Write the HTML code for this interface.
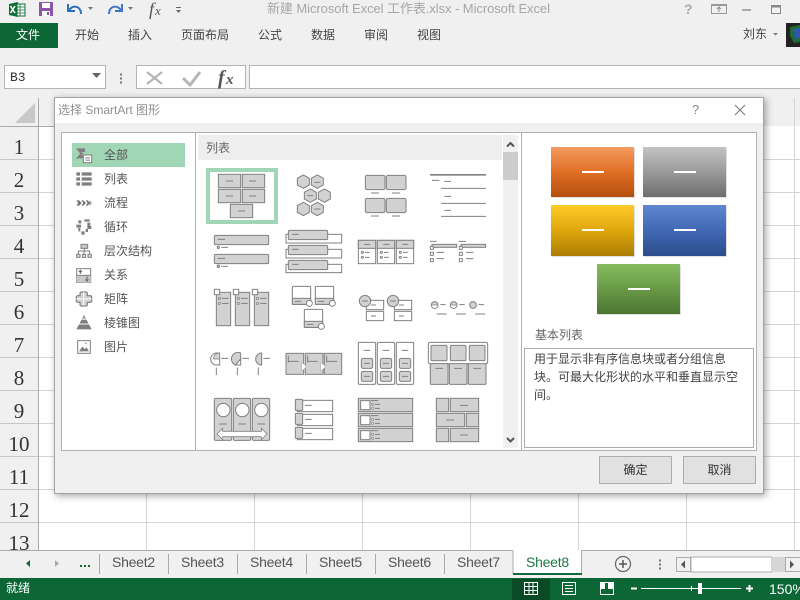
<!DOCTYPE html>
<html><head><meta charset="utf-8">
<style>
*{margin:0;padding:0;box-sizing:border-box}
html,body{width:800px;height:600px;overflow:hidden;background:#fff}
body{position:relative;font-family:"Liberation Sans","Noto Sans CJK SC",sans-serif;font-size:12px;color:#444}
.a{position:absolute;white-space:nowrap;line-height:16px}
svg{position:absolute;left:0;top:0}
.g{fill:#d2d2d2;stroke:#808080;stroke-width:3}
.w{fill:#fff;stroke:#808080;stroke-width:3}
.l{fill:none;stroke:#808080;stroke-width:3}
.i{fill:#7f7f7f}
.rn{font-family:"Liberation Serif",serif;font-size:21px;color:#333;width:30px;text-align:center;left:4px;line-height:24px}
.sh{font-size:14px;color:#555;top:554px;letter-spacing:-.25px}
.cat{left:104px;color:#555}
</style></head><body>

<!-- chrome backgrounds -->
<div class="a" style="left:0;top:0;width:800px;height:126px;background:#f0f0f0"></div>
<div class="a" style="left:0;top:126px;width:38px;height:424px;background:#f0f0f0"></div>
<div class="a" style="left:0;top:550px;width:800px;height:28px;background:#f0f0f0"></div>
<div class="a" style="left:0;top:578px;width:800px;height:22px;background:#0c6636"></div>
<div class="a" style="left:0;top:23px;width:58px;height:25px;background:#0c6636"></div>
<div class="a" style="left:512px;top:579px;width:38px;height:21px;background:#0a4a27"></div>
<div class="a" style="left:4px;top:65px;width:102px;height:24px;background:#fff;border:1px solid #b4b4b4"></div>
<div class="a" style="left:136px;top:65px;width:110px;height:24px;background:#fff;border:1px solid #b4b4b4"></div>
<div class="a" style="left:249px;top:65px;width:560px;height:24px;background:#fff;border:1px solid #b4b4b4"></div>

<svg width="800" height="600" viewBox="0 0 800 600">
<!-- grid -->
<g stroke="#d4d4d4" stroke-width="1" fill="none">
<path d="M38 159.500H800M38 192.500H800M38 225.500H800M38 258.500H800M38 291.500H800M38 324.500H800M38 357.500H800M38 390.500H800M38 423.500H800M38 456.500H800M38 489.500H800M38 522.500H800"/>
<path d="M146.500 98V550M254.500 98V550M362.500 98V550M470.500 98V550M578.500 98V550M686.500 98V550M794.500 98V550"/>
</g>
<g stroke="#c6c6c6" stroke-width="1"><path d="M0 159.500H38M0 192.500H38M0 225.500H38M0 258.500H38M0 291.500H38M0 324.500H38M0 357.500H38M0 390.500H38M0 423.500H38M0 456.500H38M0 489.500H38M0 522.500H38"/></g>
<path d="M38.500 98V550M0 126.500H54M0 550.500H513M581 550.500H800" stroke="#ababab" stroke-width="1"/>
<path d="M15 123L35 103V123Z" fill="#c8c8c8"/>
<!-- title icons -->
<path d="M9 4L18 2V17L9 15Z" fill="#0f7038"/><rect x="17" y="4" width="8" height="12" fill="#fff" stroke="#0f7038"/>
<path d="M20 4V16M17 7H25M17 10H25M17 13H25" stroke="#0f7038" stroke-width=".8"/>
<path d="M10.500 6L15 13M15 6L10.500 13" stroke="#fff" stroke-width="1.500"/>
<rect x="39" y="2" width="14" height="14" fill="#8e56a8"/><rect x="42" y="3" width="8" height="5" fill="#fff"/><rect x="42" y="11" width="8" height="5" fill="#fff"/><rect x="47" y="12" width="2" height="3" fill="#8e56a8"/>
<path d="M81 14C81 7 75 5 71 8L69 10" fill="none" stroke="#2f6dbd" stroke-width="2"/><path d="M68 4V11H75" fill="none" stroke="#2f6dbd" stroke-width="2"/>
<path d="M109 14C109 7 115 5 119 8L121 10" fill="none" stroke="#3f78c8" stroke-width="2"/><path d="M122 4V11H115" fill="none" stroke="#3f78c8" stroke-width="2"/>
<path d="M88 7H93L90.500 10ZM128 7H133L130.500 10Z" fill="#777"/>
<path d="M176 7H181V8H176ZM176 10H181L178.500 13Z" fill="#666"/>
<!-- window buttons -->
<rect x="711.500" y="5.500" width="15" height="8" fill="none" stroke="#999"/><path d="M711 4.500H727" stroke="#999"/><path d="M719 12V7M717 9L719 7L721 9" fill="none" stroke="#888"/>
<rect x="742" y="9" width="9" height="2" fill="#aaa"/>
<rect x="771.500" y="5.500" width="9" height="8" fill="none" stroke="#888"/><path d="M771 6.500H781" stroke="#888" stroke-width="2"/>
<path d="M773 33H778L775.500 35.500Z" fill="#777"/>
<rect x="786" y="23" width="14" height="24" fill="#222"/><path d="M790 27L800 25V42L794 43L790 36Z" fill="#1f6b35"/><path d="M793 29L800 28V38L795 39Z" fill="#2f57a8"/>
<!-- formula bar -->
<path d="M92 73H101L96.500 78Z" fill="#666"/>
<path d="M121 73.500V75.500M121 77.500V79.500M121 81.500V83.500" stroke="#555" stroke-width="1.600"/>
<path d="M147 72L162 84M162 72L147 84" stroke="#b5b5b5" stroke-width="2.200"/>
<path d="M183 78L190 85L200 72" fill="none" stroke="#b5b5b5" stroke-width="3"/>
<text x="218" y="84" font-family="Liberation Serif" font-style="italic" font-weight="bold" font-size="20" fill="#555">f</text><text x="226" y="84" font-family="Liberation Serif" font-style="italic" font-weight="bold" font-size="15" fill="#555">x</text>
<text x="149" y="15" font-family="Liberation Serif" font-style="italic" font-size="18" fill="#555">f</text><text x="155" y="15" font-family="Liberation Serif" font-style="italic" font-size="13" fill="#555">x</text>
<!-- sheet bar -->
<path d="M99.500 554V574M168.500 554V574M237.500 554V574M306.500 554V574M375.500 554V574M444.500 554V574" stroke="#aaa"/>
<path d="M26 563.500L30 560V567Z" fill="#0f6b38"/><path d="M59 563.500L55 560V567Z" fill="#aaa"/>
<path d="M80 565H82V567H80ZM84 565H86V567H84ZM88 565H90V567H88Z" fill="#0f6b38"/>
<rect x="513" y="550" width="68" height="25" fill="#fff"/>
<path d="M513 550.500V574M581.500 550V574" stroke="#ababab"/>
<rect x="513" y="573" width="69" height="2" fill="#0f6b38"/>
<circle cx="623" cy="564" r="7.500" fill="none" stroke="#666" stroke-width="1.200"/><path d="M619 564H627M623 560V568" stroke="#555" stroke-width="1.500"/>
<path d="M660 559.500V561.500M660 563.500V565.500M660 567.500V569.500" stroke="#555" stroke-width="1.600"/>
<rect x="676.500" y="557.500" width="14" height="14" fill="#f0f0f0" stroke="#ababab"/>
<rect x="691" y="557" width="81" height="15" fill="#fff" stroke="#ababab"/>
<rect x="772" y="557" width="13" height="15" fill="#d6d6d6"/>
<rect x="785.500" y="557.500" width="15" height="14" fill="#f0f0f0" stroke="#ababab"/>
<path d="M681 564.500L685 560.500V568.500ZM794 564.500L790 560.500V568.500Z" fill="#555"/>
<!-- status icons -->
<path d="M524.500 582.500H537.500V594.500H524.500ZM524.500 586.500H537.500M524.500 590.500H537.500M529 582.500V594.500M533 582.500V594.500" fill="none" stroke="#fff"/>
<rect x="562.500" y="582.500" width="13" height="12" fill="none" stroke="#fff"/><path d="M565 585.500H573M565 588.500H573M565 591.500H573" stroke="#fff"/>
<rect x="600.500" y="582.500" width="13" height="12" fill="none" stroke="#fff"/><path d="M601 583H605V589H601ZM608 583H613V589H608Z" fill="#fff"/>
<path d="M641 588.500H741M691.500 586V591" stroke="#fff" stroke-width="1"/>
<path d="M631 588.500H637M746 588.500H753M749.500 585V592" stroke="#fff" stroke-width="2"/>
<rect x="698" y="583" width="4" height="11" fill="#fff"/>
</svg>

<!-- top text -->
<div class="a" style="left:267px;top:1px;color:#a6a6a6;font-size:13px;letter-spacing:-.07px">新建 Microsoft Excel 工作表.xlsx - Microsoft Excel</div>
<div class="a" style="left:684px;top:1px;color:#aaa;font-size:14px;font-weight:bold">?</div>
<div class="a" style="left:16px;top:27px;color:#fff">文件</div>
<div class="a" style="left:75px;top:27px">开始</div>
<div class="a" style="left:128px;top:27px">插入</div>
<div class="a" style="left:181px;top:27px">页面布局</div>
<div class="a" style="left:258px;top:27px">公式</div>
<div class="a" style="left:311px;top:27px">数据</div>
<div class="a" style="left:364px;top:27px">审阅</div>
<div class="a" style="left:417px;top:27px">视图</div>
<div class="a" style="left:743px;top:26px">刘东</div>
<div class="a" style="left:10px;top:70px;font-family:'Liberation Mono',monospace;font-size:13px;color:#333">B3</div>

<!-- row numbers -->
<div class="a rn" style="top:135px">1</div>
<div class="a rn" style="top:168px">2</div>
<div class="a rn" style="top:201px">3</div>
<div class="a rn" style="top:234px">4</div>
<div class="a rn" style="top:267px">5</div>
<div class="a rn" style="top:300px">6</div>
<div class="a rn" style="top:333px">7</div>
<div class="a rn" style="top:366px">8</div>
<div class="a rn" style="top:399px">9</div>
<div class="a rn" style="top:432px">10</div>
<div class="a rn" style="top:465px">11</div>
<div class="a rn" style="top:498px">12</div>
<div class="a" style="left:0;top:530px;width:38px;height:20px;overflow:hidden"><div class="a rn" style="top:1px">13</div></div>

<!-- sheet tabs -->
<div class="a sh" style="left:112px">Sheet2</div>
<div class="a sh" style="left:181px">Sheet3</div>
<div class="a sh" style="left:250px">Sheet4</div>
<div class="a sh" style="left:319px">Sheet5</div>
<div class="a sh" style="left:388px">Sheet6</div>
<div class="a sh" style="left:457px">Sheet7</div>
<div class="a sh" style="left:526px;color:#1d7a48">Sheet8</div>
<div class="a" style="left:6px;top:580px;color:#fff">就绪</div>
<div class="a" style="left:769px;top:581px;color:#fff;font-size:14px">150%</div>

<!-- dialog -->
<div class="a" style="left:54px;top:97px;width:710px;height:397px;background:#f0f0f0;border:1px solid #a3a3a3;box-shadow:2px 2px 7px rgba(0,0,0,.35)"></div>
<div class="a" style="left:55px;top:98px;width:708px;height:25px;background:#fff"></div>
<div class="a" style="left:58px;top:102px;color:#8f8f8f">选择 SmartArt 图形</div>
<div class="a" style="left:692px;top:102px;color:#8a8a8a;font-size:13px">?</div>
<div class="a" style="left:61px;top:132px;width:135px;height:319px;background:#fff;border:1px solid #aeb2b8"></div>
<div class="a" style="left:195px;top:132px;width:327px;height:319px;background:#fff;border:1px solid #aeb2b8"></div>
<div class="a" style="left:521px;top:132px;width:236px;height:319px;background:#fff;border:1px solid #aeb2b8"></div>
<div class="a" style="left:72px;top:143px;width:113px;height:24px;background:#a0d5b5"></div>
<div class="a" style="left:198px;top:135px;width:304px;height:25px;background:#eeeeee"></div>
<div class="a" style="left:503px;top:135px;width:15px;height:313px;background:#f0f0f0"></div>
<div class="a" style="left:503px;top:152px;width:15px;height:28px;background:#cdcdcd"></div>
<div class="a" style="left:206px;top:168px;width:72px;height:56px;border:4px solid #a0d5b5"></div>
<div class="a" style="left:206px;top:140px;color:#666">列表</div>

<div class="a cat" style="top:147px">全部</div>
<div class="a cat" style="top:171px">列表</div>
<div class="a cat" style="top:195px">流程</div>
<div class="a cat" style="top:219px">循环</div>
<div class="a cat" style="top:243px">层次结构</div>
<div class="a cat" style="top:267px">关系</div>
<div class="a cat" style="top:291px">矩阵</div>
<div class="a cat" style="top:315px">棱锥图</div>
<div class="a cat" style="top:339px">图片</div>

<div class="a" style="left:535px;top:327px;color:#666">基本列表</div>
<div class="a" style="left:524px;top:348px;width:230px;height:100px;background:#fff;border:1px solid #ababab"></div>
<div class="a" style="left:534px;top:350px;line-height:18px;color:#444;white-space:nowrap">用于显示非有序信息块或者分组信息<br>块。可最大化形状的水平和垂直显示空<br>间。</div>
<div class="a" style="left:599px;top:456px;width:73px;height:28px;background:#e1e1e1;border:1px solid #adadad;text-align:center;line-height:26px;color:#333">确定</div>
<div class="a" style="left:683px;top:456px;width:73px;height:28px;background:#e1e1e1;border:1px solid #adadad;text-align:center;line-height:26px;color:#333">取消</div>

<svg width="800" height="600" viewBox="0 0 800 600">
<defs>
<linearGradient id="o" x1="0" y1="0" x2="0" y2="1"><stop offset="0" stop-color="#f49a60"/><stop offset=".5" stop-color="#e06f25"/><stop offset="1" stop-color="#b5500f"/></linearGradient>
<linearGradient id="s" x1="0" y1="0" x2="0" y2="1"><stop offset="0" stop-color="#c2c2c2"/><stop offset=".5" stop-color="#9a9a9a"/><stop offset="1" stop-color="#6e6e6e"/></linearGradient>
<linearGradient id="y" x1="0" y1="0" x2="0" y2="1"><stop offset="0" stop-color="#ffcb28"/><stop offset=".5" stop-color="#dfa70d"/><stop offset="1" stop-color="#ab7c04"/></linearGradient>
<linearGradient id="b" x1="0" y1="0" x2="0" y2="1"><stop offset="0" stop-color="#5f86cf"/><stop offset=".5" stop-color="#4068b4"/><stop offset="1" stop-color="#2d4d8c"/></linearGradient>
<linearGradient id="n" x1="0" y1="0" x2="0" y2="1"><stop offset="0" stop-color="#86bd60"/><stop offset=".5" stop-color="#689a47"/><stop offset="1" stop-color="#4c7531"/></linearGradient>
</defs>
<!-- close X -->
<path d="M735 105L745 115M745 105L735 115" stroke="#777" stroke-width="1"/>
<!-- scroll arrows -->
<path d="M507 146.500L510.500 143L514 146.500M507 438L510.500 441.500L514 438" fill="none" stroke="#555" stroke-width="2"/>
<!-- preview -->
<g>
<rect x="552" y="148" width="83" height="50" fill="#999" opacity=".3"/><rect x="644" y="148" width="83" height="50" fill="#999" opacity=".3"/>
<rect x="552" y="206" width="83" height="51" fill="#999" opacity=".3"/><rect x="644" y="206" width="83" height="51" fill="#999" opacity=".3"/>
<rect x="598" y="265" width="83" height="50" fill="#999" opacity=".3"/>
<rect x="551" y="147" width="83" height="50" fill="url(#o)"/>
<rect x="643" y="147" width="83" height="50" fill="url(#s)"/>
<rect x="551" y="205" width="83" height="51" fill="url(#y)"/>
<rect x="643" y="205" width="83" height="51" fill="url(#b)"/>
<rect x="597" y="264" width="83" height="50" fill="url(#n)"/>
<path d="M582 171h22v2h-22zM674 171h22v2h-22zM582 229h22v2h-22zM674 229h22v2h-22zM628 288h22v2h-22z" fill="#fff"/>
</g>

<!-- category icons -->
<g transform="translate(55,130) scale(.33333)">
<path class="i" d="M63 55H90V66H78L86 71L78 76H90V85H63L76 71Z"/>
<rect x="85" y="75" width="25" height="23" fill="#fff" stroke="#7f7f7f" stroke-width="3"/><path d="M91 82H105M91 87H105M91 92H105" stroke="#7f7f7f" stroke-width="2"/>
<path class="i" d="M64 127h11v10H64zM80 127h30v10H80zM64 142h11v10H64zM80 142h30v10H80zM64 157h11v10H64zM80 157h30v10H80z"/>
<path d="M64 211h8l8 8-8 8h-8l6-8zM79 211h6l8 8-8 8h-6l6-8zM92 211h6l8 8-8 8h-6l6-8zM103 212h2l5 7-5 7h-2l4-7z" fill="#707070"/>
<path class="i" d="M70 271h9v9h-9zM88 268h16v7H88zM97 278h9v12h-9zM64 284h14v9H64zM97 288h12v9H97zM79 304h10v10H79zM70 294h6v10h-6zM92 297h7v9h-7z"/>
<rect x="78" y="343" width="20" height="12" fill="#c8c8c8" stroke="#7f7f7f" stroke-width="3"/>
<path d="M88 355V363M70 372V363H104V372M87 363V372" fill="none" stroke="#7f7f7f" stroke-width="3"/>
<path d="M65 373h10v9H65zM82 373h10v9H82zM99 373h10v9H99z" fill="#ddd" stroke="#7f7f7f" stroke-width="3"/>
<rect x="65" y="416" width="42" height="41" fill="#fff" stroke="#7f7f7f" stroke-width="3"/><rect x="65" y="436" width="42" height="21" fill="#c8c8c8"/><path d="M65 436H107" stroke="#7f7f7f" stroke-width="3"/>
<path d="M76 432V422M71 426L76 421L81 426M96 439V452M91 448L96 453L101 448" fill="none" stroke="#666" stroke-width="3"/>
<path d="M78 486h16l3 3v8h10l3 3v14l-3 3H97v8l-3 3H78l-3-3v-8H67l-3-3v-14l3-3h8v-8z" fill="#d2d2d2" stroke="#7f7f7f" stroke-width="3.500"/>
<path d="M86 486V527M64 507H110" stroke="#fff" stroke-width="3"/>
<path class="i" d="M87 555L110 598H64Z"/>
<path d="M80 568H94M72 582H102" stroke="#fff" stroke-width="3"/><path d="M84 562H90L93 568H81Z" fill="#bbb"/>
<rect x="68" y="632" width="38" height="38" fill="#fff" stroke="#7f7f7f" stroke-width="3"/><path class="i" d="M72 664L82 650L89 657L95 652L102 664Z"/><circle cx="93" cy="640" r="3" fill="#aaa"/>
</g>

<!-- thumbs row 1-2 -->
<g transform="translate(196,130) scale(.33333)">
<rect class="g" x="67" y="133" width="67" height="40"/><rect class="g" x="139" y="133" width="67" height="40"/>
<rect class="g" x="67" y="178" width="67" height="40"/><rect class="g" x="139" y="178" width="67" height="40"/>
<rect class="g" x="103" y="223" width="67" height="40"/>
<path class="l" d="M90 153H111M159 153H180M90 198H111M159 198H180M126 243H147"/>
<g class="g"><path d="M322 135l18 10v20l-18 10l-18-10v-20z"/><path d="M364 135l18 10v20l-18 10l-18-10v-20z"/><path d="M343 177l18 10v20l-18 10l-18-10v-20z"/><path d="M385 177l18 10v20l-18 10l-18-10v-20z"/><path d="M322 217l18 10v20l-18 10l-18-10v-20z"/><path d="M364 217l18 10v20l-18 10l-18-10v-20z"/></g>
<path class="l" d="M355 157H373M334 197H352M355 237H373"/>
<rect class="g" x="508" y="136" width="59" height="43" rx="5"/><rect class="g" x="571" y="136" width="59" height="43" rx="5"/>
<rect class="g" x="508" y="205" width="59" height="43" rx="5"/><rect class="g" x="571" y="205" width="59" height="43" rx="5"/>
<path class="l" d="M525 189H549M588 189H612M525 258H549M588 258H612"/>
<path d="M702 134.500H870" stroke="#808080" stroke-width="5"/>
<path class="l" d="M708 151H730M745 154H765M735 175H870M745 199H765M735 220H870M745 241H765M735 259H870"/>
<!-- T5 -->
<rect class="g" x="55" y="316" width="163" height="28" rx="4"/><rect class="g" x="55" y="373" width="163" height="28" rx="4"/>
<path class="l" d="M65 328H87M76 352H96M65 385H87M76 409H96"/>
<circle class="g" cx="67" cy="352" r="3.500"/><circle class="g" cx="67" cy="409" r="3.500"/>
<!-- T6 -->
<rect class="w" x="270" y="313" width="167" height="26"/><rect class="g" x="277" y="301" width="118" height="28" rx="4"/>
<rect class="w" x="270" y="358" width="167" height="26"/><rect class="g" x="277" y="346" width="118" height="28" rx="4"/>
<rect class="w" x="270" y="403" width="167" height="25"/><rect class="g" x="277" y="391" width="118" height="28" rx="4"/>
<path class="l" d="M288 313H308M288 358H308M288 403H308"/>
<!-- T7 -->
<rect class="w" x="487" y="331" width="52" height="70"/><rect class="w" x="544" y="331" width="52" height="70"/><rect class="w" x="601" y="331" width="52" height="70"/>
<rect class="g" x="487" y="331" width="52" height="24"/><rect class="g" x="544" y="331" width="52" height="24"/><rect class="g" x="601" y="331" width="52" height="24"/>
<path class="l" d="M505 343H523M562 343H580M619 343H637M507 367H521M507 382H521M564 367H578M564 382H578M621 367H635M621 382H635"/>
<g class="w"><circle cx="499" cy="367" r="3"/><circle cx="499" cy="382" r="3"/><circle cx="556" cy="367" r="3"/><circle cx="556" cy="382" r="3"/><circle cx="613" cy="367" r="3"/><circle cx="613" cy="382" r="3"/></g>
<!-- T8 -->
<rect class="g" x="708" y="343" width="74" height="9"/><rect class="g" x="795" y="343" width="74" height="9"/>
<g class="w"><rect x="703" y="349" width="9" height="9"/><rect x="703" y="367" width="9" height="9"/><rect x="703" y="386" width="9" height="9"/><rect x="790" y="349" width="9" height="9"/><rect x="790" y="367" width="9" height="9"/><rect x="790" y="386" width="9" height="9"/></g>
<path class="l" d="M702 334H722M788 334H810M722 367H744M722 386H744M810 367H832M810 386H832"/>
</g>

<!-- thumbs row 3-5 -->
<g transform="translate(196,285) scale(.33333)">
<!-- T9 -->
<rect class="g" x="61" y="22" width="43" height="100"/><rect class="g" x="118" y="22" width="43" height="100"/><rect class="g" x="175" y="22" width="43" height="100"/>
<g class="w"><rect x="55" y="13" width="16" height="16"/><rect x="112" y="13" width="16" height="16"/><rect x="169" y="13" width="16" height="16"/></g>
<path class="l" d="M78 40H98M78 55H98M135 40H155M135 55H155M192 40H212M192 55H212"/>
<g fill="#d2d2d2" stroke="#808080" stroke-width="2"><circle cx="70" cy="40" r="3.500"/><circle cx="70" cy="55" r="3.500"/><circle cx="127" cy="40" r="3.500"/><circle cx="127" cy="55" r="3.500"/><circle cx="184" cy="40" r="3.500"/><circle cx="184" cy="55" r="3.500"/></g>
<!-- T10 -->
<rect class="w" x="289" y="4" width="55" height="54" rx="3"/><rect class="g" x="289" y="40" width="55" height="18"/>
<rect class="w" x="358" y="4" width="55" height="54" rx="3"/><rect class="g" x="358" y="40" width="55" height="18"/>
<rect class="w" x="325" y="73" width="55" height="54" rx="3"/><rect class="g" x="325" y="109" width="55" height="18"/>
<path class="l" d="M296 49H316M365 49H385M332 118H352"/>
<circle class="w" cx="340" cy="55" r="9"/><circle class="w" cx="409" cy="55" r="9"/><circle class="w" cx="376" cy="124" r="9"/>
<!-- T11 -->
<rect class="w" x="511" y="46" width="52" height="28"/><rect class="w" x="511" y="79" width="52" height="28"/><rect class="w" x="595" y="46" width="52" height="28"/><rect class="w" x="595" y="79" width="52" height="28"/>
<circle class="g" cx="507" cy="48" r="17"/><circle class="g" cx="591" cy="48" r="17"/>
<path class="l" d="M498 48H516M582 48H600M525 60H540M609 60H624M525 93H540M609 93H624"/>
<!-- T12 -->
<circle class="g" cx="716" cy="60" r="10"/><circle class="g" cx="773" cy="60" r="10"/><circle class="g" cx="831" cy="60" r="10"/>
<path d="M706 60a10 10 0 0 0 20 0Z" fill="#fff" stroke="#808080" stroke-width="2"/><path d="M763 60a10 10 0 0 0 20 0Z" fill="#fff" stroke="#808080" stroke-width="2"/>
<path class="l" d="M733 59H749M790 59H806M848 59H864M722 87H752M780 87H810M838 87H868"/>
<!-- T13 -->
<path class="w" d="M71 204V240H62A18 18 0 0 1 62 204Z"/><path d="M71 204V222H52A18 18 0 0 1 71 204Z" fill="#d2d2d2" stroke="#808080" stroke-width="2"/>
<path class="g" d="M134 204V222L118 240A18 18 0 0 1 134 204Z"/><path class="w" d="M134 222V240H118Z"/>
<path class="g" d="M197 204V240A18 18 0 0 1 197 204Z"/>
<path class="l" d="M76 220H96M139 220H159M202 220H222M61 248V270M124 248V270M187 248V270"/>
<!-- T14 -->
<rect class="g" x="270" y="205" width="53" height="63"/><rect class="g" x="328" y="205" width="53" height="63"/><rect class="g" x="385" y="205" width="52" height="63"/>
<path d="M317 232L332 245L317 258ZM374 232L389 245L374 258Z" fill="#fff" stroke="#aaa" stroke-width="1.500"/>
<path class="l" d="M277 212V232M277 229H308M335 212V232M335 229H365M392 212V232M392 229H423"/>
<!-- T15 -->
<rect class="w" x="487" y="172" width="52" height="126" rx="4"/><rect class="w" x="544" y="172" width="52" height="126" rx="4"/><rect class="w" x="601" y="172" width="52" height="126" rx="4"/>
<g class="g"><rect x="496" y="220" width="34" height="30" rx="5"/><rect x="496" y="259" width="34" height="30" rx="5"/><rect x="553" y="220" width="34" height="30" rx="5"/><rect x="553" y="259" width="34" height="30" rx="5"/><rect x="610" y="220" width="34" height="30" rx="5"/><rect x="610" y="259" width="34" height="30" rx="5"/></g>
<path class="l" d="M503 196H523M560 196H580M617 196H637M504 235H522M504 274H522M561 235H579M561 274H579M618 235H636M618 274H636"/>
<!-- T16 -->
<rect class="g" x="703" y="232" width="53" height="66" rx="3"/><rect class="g" x="760" y="232" width="53" height="66" rx="3"/><rect class="g" x="817" y="232" width="53" height="66" rx="3"/>
<rect class="w" x="697" y="172" width="178" height="64" rx="5"/>
<g class="g"><rect x="705" y="181" width="48" height="46" rx="4"/><rect x="763" y="181" width="47" height="46" rx="4"/><rect x="820" y="181" width="47" height="46" rx="4"/></g>
<path class="l" d="M718 250H741M775 250H798M832 250H855"/>
<!-- T17 -->
<rect class="g" x="55" y="340" width="52" height="126" rx="4"/><rect class="g" x="112" y="340" width="52" height="126" rx="4"/><rect class="g" x="169" y="340" width="52" height="126" rx="4"/>
<circle class="w" cx="82" cy="375" r="20"/><circle class="w" cx="139" cy="375" r="20"/><circle class="w" cx="196" cy="375" r="20"/>
<path class="l" d="M70 417H93M127 417H150M184 417H207"/>
<path d="M63 447L80 430V439H196V430L213 447L196 464V455H80V464Z" fill="#fff" stroke="#808080" stroke-width="2.400"/>
<!-- T18 -->
<g class="w"><rect x="304" y="346" width="106" height="34"/><rect x="304" y="388" width="106" height="34"/><rect x="304" y="430" width="106" height="34"/></g>
<g class="g"><rect x="298" y="343" width="22" height="33" rx="3"/><rect x="298" y="385" width="22" height="33" rx="3"/><rect x="298" y="427" width="22" height="33" rx="3"/></g>
<path class="l" d="M327 361H347M327 403H347M327 445H347"/>
<!-- T19 -->
<g class="g"><rect x="487" y="340" width="163" height="40"/><rect x="487" y="385" width="163" height="40"/><rect x="487" y="430" width="163" height="40"/></g>
<g class="w"><rect x="494" y="347" width="28" height="27"/><rect x="494" y="392" width="28" height="27"/><rect x="494" y="437" width="28" height="27"/></g>
<path class="l" d="M525 347H547M537 358H552M537 370H552M525 392H547M537 403H552M537 415H552M525 437H547M537 448H552M537 460H552"/>
<g fill="#eee" stroke="#808080" stroke-width="2"><circle cx="530" cy="358" r="3"/><circle cx="530" cy="370" r="3"/><circle cx="530" cy="403" r="3"/><circle cx="530" cy="415" r="3"/><circle cx="530" cy="448" r="3"/><circle cx="530" cy="460" r="3"/></g>
<!-- T20 -->
<g class="g"><rect x="721" y="340" width="37" height="40"/><rect x="763" y="340" width="85" height="40"/><rect x="721" y="385" width="85" height="40"/><rect x="811" y="385" width="37" height="40"/><rect x="721" y="430" width="37" height="40"/><rect x="763" y="430" width="85" height="40"/></g>
<path class="l" d="M792 361H816M750 405H774M792 450H816"/>
</g>
</svg>
</body></html>
